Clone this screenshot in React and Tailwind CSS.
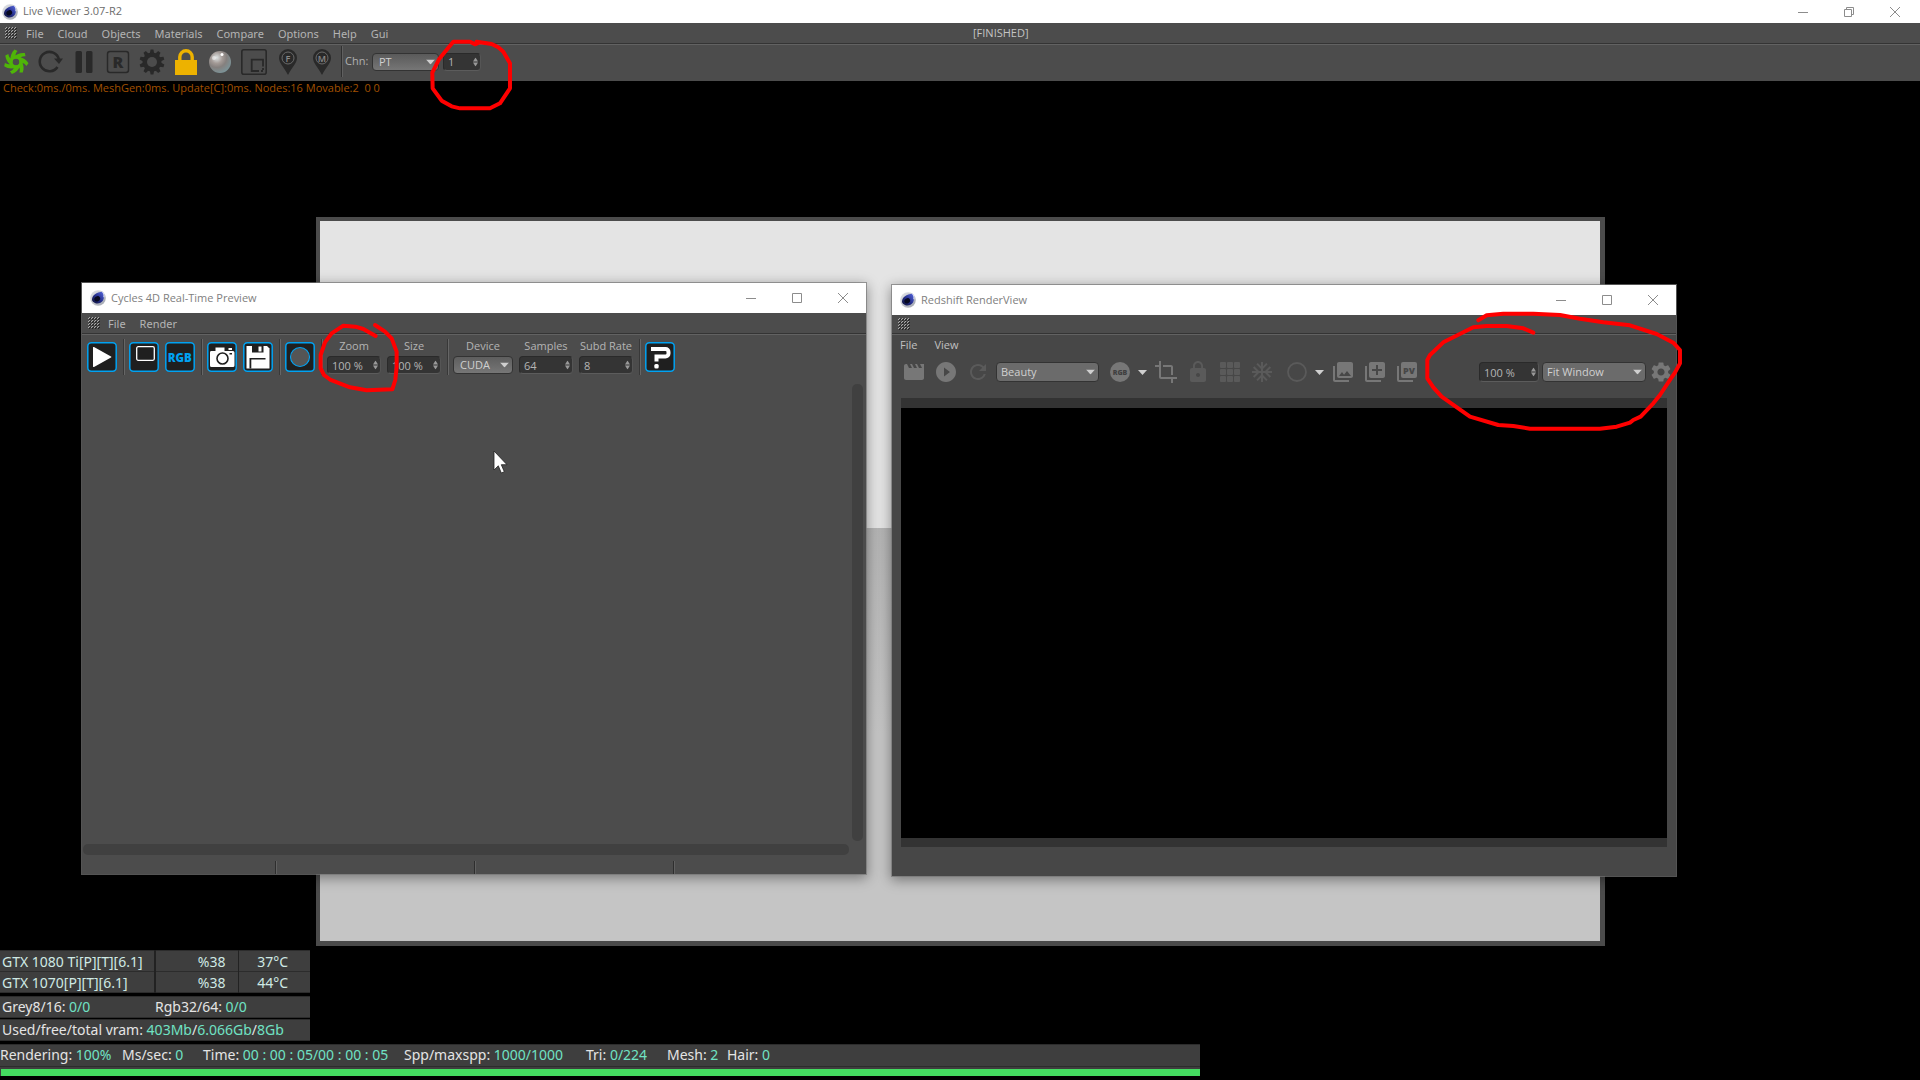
import { Fragment } from "react";
import {
  MdMovie,
  MdPlayCircleFilled,
  MdRefresh,
  MdCrop,
  MdLock,
  MdAcUnit,
  MdPhotoLibrary,
  MdLibraryAdd,
  MdSettings,
} from "react-icons/md";

function AppLogo() {
  return (
    <svg viewBox="0 0 16 16" className="size-4 shrink-0" aria-hidden="true">
      <defs>
        <linearGradient id="logoRim" x1="0" y1="0" x2="1" y2="1">
          <stop offset="0" stopColor="#e6e8ec" />
          <stop offset="1" stopColor="#9da1ab" />
        </linearGradient>
        <linearGradient id="logoBody" x1="1" y1="0" x2="0" y2="1">
          <stop offset="0" stopColor="#5a6be0" />
          <stop offset="0.5" stopColor="#26308e" />
          <stop offset="1" stopColor="#0c1034" />
        </linearGradient>
      </defs>
      <circle cx="8" cy="8" r="7.800" fill="url(#logoRim)" />
      <path d="M2 9.500C2 5.500 6.500 2 12.500 1.800c1.800 2 2 6 .5 8.700-1.500 2.500-5 3.500-7.500 2.700C3.500 12.500 2 11.500 2 9.500z" fill="url(#logoBody)" />
      <ellipse cx="7.200" cy="8.800" rx="3" ry="2.500" fill="#070920" transform="rotate(-30 7.200 8.800)" />
      <path d="M12.500 2c1.200 1.300 1.700 3.200 1.300 5.200" stroke="#eef0ff" strokeWidth="0.900" fill="none" />
    </svg>
  );
}

function Grip() {
  return (
    <svg viewBox="0 0 12 12" className="size-3 shrink-0" aria-hidden="true">
      <defs>
        <pattern id="gripDots" width="3" height="3" patternUnits="userSpaceOnUse">
          <rect width="1" height="1" x="1" fill="#aaaaaa" />
          <rect width="1" height="1" y="1" fill="#aaaaaa" />
          <rect width="1" height="1" x="2" y="1" fill="#222222" />
          <rect width="1" height="1" x="1" y="2" fill="#222222" />
        </pattern>
      </defs>
      <rect width="12" height="12" fill="url(#gripDots)" />
    </svg>
  );
}

function WindowControls({ restore = false }) {
  const base = "flex h-full w-[46px] items-center justify-center";
  return (
    <div className="ml-auto flex h-full text-[#8c8c8c]">
      <button type="button" aria-label="Minimize" className={base}>
        <svg viewBox="0 0 10 10" className="size-2.5" stroke="currentColor"><path d="M0 5.500h10" /></svg>
      </button>
      <button type="button" aria-label={restore ? "Restore" : "Maximize"} className={base}>
        <svg viewBox="0 0 10 10" className="size-2.5" fill="none" stroke="currentColor">
          {restore ? <path d="M.5 2.500h7v7h-7zM2.500 2.500v-2h7v7h-2" /> : <path d="M.5.5h9v9h-9z" />}
        </svg>
      </button>
      <button type="button" aria-label="Close" className={base}>
        <svg viewBox="0 0 10 10" className="size-2.5" stroke="currentColor"><path d="M0 0l10 10M10 0L0 10" /></svg>
      </button>
    </div>
  );
}

function Menu({ items }) {
  return (
    <nav className="flex gap-[14px] pt-0.5 font-['Noto_Sans',sans-serif] text-[11px] leading-4 text-[#b4b4b4]">
      {items.map((t) => (
        <button type="button" key={t}>{t}</button>
      ))}
    </nav>
  );
}

function Arrow({ className = "" }) {
  return (
    <svg viewBox="0 0 9 5" className={"h-[5px] w-[9px] " + className} aria-hidden="true">
      <path d="M0 0h9L4.500 5z" fill="#cfcfcf" />
    </svg>
  );
}

function Dropdown({ label, value, className, selectClass }) {
  return (
    <div className={"relative shrink-0 " + className}>
      <select
        aria-label={label}
        defaultValue={value}
        className={"block size-full appearance-none rounded border border-[#333333] text-[11px] leading-4 text-[#d0d0d0] " + selectClass}
      >
        <option>{value}</option>
      </select>
      <Arrow className="pointer-events-none absolute top-1/2 right-1 -translate-y-1/2" />
    </div>
  );
}

function NumberBox({ label, value, className }) {
  return (
    <div className={"relative shrink-0 " + className}>
      <input
        aria-label={label}
        defaultValue={value}
        className="block size-full rounded-sm border border-t-[#2a2a2a] border-r-[#555555] border-b-[#5c5c5c] border-l-[#2a2a2a] bg-[#343434] pl-1 text-[11px] leading-4 text-[#b4b4b4]"
      />
      <svg viewBox="0 0 5 9" className="pointer-events-none absolute top-1/2 right-[3px] h-[9px] w-[5px] -translate-y-1/2" aria-hidden="true">
        <path d="M0 4l2.500-4L5 4zM0 5l2.500 4L5 5z" fill="#999999" />
      </svg>
    </div>
  );
}

/* ---------- main toolbar ---------- */

const C = "#292929";

function GearShape({ fill, hole, teeth = 10 }) {
  return (
    <>
      <circle cx="13" cy="13" r="9.500" fill={fill} />
      {Array.from({ length: teeth }, (_, i) => (
        <path key={i} d="M10.800 4.500l.8-4h2.800l.8 4z" fill={fill} transform={`rotate(${(i * 360) / teeth} 13 13)`} />
      ))}
      <circle cx="13" cy="13" r="5" fill={hole} />
    </>
  );
}

function Pin({ letter }) {
  return (
    <>
      <path d="M13 0a9 9 0 0 0-9 9c0 5 5 9 9 17 4-8 9-12 9-17a9 9 0 0 0-9-9z" fill={C} />
      <circle cx="13" cy="9" r="6" fill="none" stroke="#6a6a6a" strokeWidth="1" />
      <text x="13" y="12.500" fontSize="9" textAnchor="middle" fontWeight="600" fill="#8a8a8a">{letter}</text>
    </>
  );
}

const mainTools = [
  ["Start render", (
    <>
      {Array.from({ length: 7 }, (_, i) => (
        <path key={i} d="M7.500 11C7.200 7 8.500 3.500 11.500.500L14.500 2C12.300 4.300 11.800 6.500 13.500 9z" fill="#4fb508" transform={`rotate(${(i * 360) / 7} 13 13)`} />
      ))}
      <circle cx="13" cy="13" r="4.900" fill="none" stroke="#4fb508" strokeWidth="3.200" />
    </>
  )],
  ["Restart", (
    <>
      <path d="M20.500 18A9.700 9.700 0 1 1 21.800 10" fill="none" stroke={C} strokeWidth="2.600" />
      <path d="M17 9.500h9l-4 5.500z" fill={C} />
    </>
  )],
  ["Pause", <path d="M6 2h3.500a1.500 1.500 0 0 1 1.500 1.500v19A1.500 1.500 0 0 1 9.500 24H6a1.500 1.500 0 0 1-1.500-1.500v-19A1.500 1.500 0 0 1 6 2zM16.500 2H20a1.500 1.500 0 0 1 1.500 1.500v19A1.500 1.500 0 0 1 20 24h-3.500a1.500 1.500 0 0 1-1.500-1.500v-19A1.500 1.500 0 0 1 16.500 2z" fill={C} />],
  ["Region", (
    <>
      <rect x="2.500" y="2.500" width="21" height="21" rx="2.500" fill="none" stroke={C} strokeWidth="1.500" />
      <text x="13" y="19" fontSize="16" fontWeight="800" textAnchor="middle" fill={C}>R</text>
    </>
  )],
  ["Settings", <GearShape fill={C} hole="#4c4c4c" />],
  ["Lock resolution", (
    <>
      <rect x="2" y="11" width="22" height="15" fill="#edb200" />
      <path d="M6.800 11V8a6.200 6.200 0 0 1 12.400 0v3" fill="none" stroke="#edb200" strokeWidth="3.400" />
    </>
  )],
  ["Clay mode", (
    <>
      <defs>
        <radialGradient id="clay" cx="0.35" cy="0.3" r="0.75">
          <stop offset="0" stopColor="#dfe4e4" />
          <stop offset="0.35" stopColor="#a39a96" />
          <stop offset="0.6" stopColor="#85807e" />
          <stop offset="1" stopColor="#7b9499" />
        </radialGradient>
      </defs>
      <circle cx="13" cy="13" r="11" fill="url(#clay)" />
      <circle cx="15" cy="5.500" r="1.500" fill="#ffffff" />
      <circle cx="7" cy="9" r="2" fill="#ffffff" opacity="0.5" />
    </>
  )],
  ["Render region", (
    <>
      <rect x="0.800" y="0.800" width="24.400" height="24.400" rx="2" fill="none" stroke={C} strokeWidth="1.600" />
      <path d="M22 17.500v-6.800H10.700V22H18M22 19v2M20 22h2" fill="none" stroke={C} strokeWidth="1.800" />
    </>
  )],
  ["Focus picker", <Pin letter="F" />],
  ["Material picker", <Pin letter="M" />],
];

function MainHeader() {
  return (
    <header>
      <div className="flex h-[23px] items-center bg-white pr-0.5 pl-0.5">
        <AppLogo />
        <h1 className="ml-[5px] text-[11px] text-[#6c6c6c]">Live Viewer 3.07-R2</h1>
        <WindowControls restore />
      </div>
      <div className="relative flex h-[21px] items-center border-b border-[#343434] bg-[#4c4c4c] pl-[5px]">
        <Grip />
        <div className="w-[9px]" />
        <Menu items={["File", "Cloud", "Objects", "Materials", "Compare", "Options", "Help", "Gui"]} />
        <p className="absolute left-1/2 ml-[13px] text-[11px] text-[#c4c4c4]">[FINISHED]</p>
      </div>
      <div className="flex h-[37px] items-center border-t border-[#626262] bg-[#4c4c4c] pb-[3px] pl-[3px]">
        <div className="flex gap-2">
          {mainTools.map(([name, art]) => (
            <button type="button" key={name} aria-label={name}>
              <svg viewBox="0 0 26 26" className="size-[26px]">{art}</svg>
            </button>
          ))}
        </div>
        <div className="ml-[6px] h-[31px] border-r border-l border-r-[#606060] border-l-[#303030]" />
        <span className="ml-0.5 w-[27px] text-[11px] text-[#b0b0b0]">Chn:</span>
        <Dropdown label="Channel" value="PT" className="h-[18px] w-[67px]" selectClass="bg-linear-to-b from-[#5a5a5a] to-[#767676] pl-1.5" />
        <NumberBox label="Channel index" value="1" className="ml-1 h-[18px] w-[38px]" />
      </div>
    </header>
  );
}

/* ---------- statistics ---------- */

const Val = ({ children }) => <span className="text-[#70e2c4]">{children}</span>;
const strip = "border-y border-[#2c2c2c] bg-[#3e3e3e]";

const gpus = [
  ["GTX 1080 Ti[P][T][6.1]", "%38", "37°C"],
  ["GTX 1070[P][T][6.1]", "%38", "44°C"],
];

function Stats() {
  return (
    <footer className="mt-1 font-['Noto_Sans',sans-serif] text-sm leading-[19px] whitespace-pre text-[#e4e4e4]">
      <div className="w-[310px]">
        <table className="w-full table-fixed border-collapse text-[#cfe9e4]">
          <tbody>
            {gpus.map(([name, load, temp]) => (
              <tr key={name} className={"h-[21px] " + strip}>
                <td className="w-[155px] border-r-2 border-[#222222] p-0 pl-0.5">{name}</td>
                <td className="w-[83px] border-r border-[#222222] p-0 pr-3 text-right">{load}</td>
                <td className="p-0 pr-[22px] text-right">{temp}</td>
              </tr>
            ))}
          </tbody>
        </table>
        <div className={"mt-[3px] flex h-[22px] pl-0.5 " + strip}>
          <p className="w-[153px]">Grey8/16: <Val>0/0</Val></p>
          <p>Rgb32/64: <Val>0/0</Val></p>
        </div>
        <p className={"mt-px h-[22px] pl-0.5 " + strip}>
          Used/free/total vram: <Val>403Mb</Val>/<Val>6.066Gb</Val>/<Val>8Gb</Val>
        </p>
      </div>
      <div className="mt-[3px] w-5/8 bg-[#3e3e3e]">
        <div className={"flex h-[23px] " + strip}>
          <p className="w-[122px]">Rendering: <Val>100%</Val></p>
          <p className="w-[81px]">Ms/sec: <Val>0</Val></p>
          <p className="w-[201px]">Time: <Val>00 : 00 : 05/00 : 00 : 05</Val></p>
          <p className="w-[182px]">Spp/maxspp: <Val>1000/1000</Val></p>
          <p className="w-[81px]">Tri: <Val>0/224</Val></p>
          <p className="w-[60px]">Mesh: <Val>2</Val></p>
          <p>Hair: <Val>0</Val></p>
        </div>
        <div className="mt-0.5 mb-1 ml-px h-[7px] bg-[#44dc60]" role="progressbar" aria-valuenow={100} aria-label="Rendering progress" />
      </div>
    </footer>
  );
}

/* ---------- floating windows ---------- */

function FloatingWindow({ title, className, children }) {
  return (
    <section className={"absolute flex w-[786px] flex-col border border-[#777777]/70 bg-clip-padding shadow-[0_3px_12px_rgba(0,0,0,0.4)] " + className}>
      <div className="flex h-[30px] shrink-0 items-center bg-white pl-2">
        <AppLogo />
        <h2 className="ml-[5px] text-[11px] text-[#808080]">{title}</h2>
        <WindowControls />
      </div>
      {children}
    </section>
  );
}

const B = "#00a2f2";

function TileButton({ name, children }) {
  return (
    <button type="button" aria-label={name} className="mt-[3px]">
      <svg viewBox="0 0 30 30" className="size-[30px]">
        <rect x="0.800" y="0.800" width="28.400" height="28.400" rx="3.500" fill="#1f1f1f" stroke={B} strokeWidth="1.500" />
        {children}
      </svg>
    </button>
  );
}

const Sep = () => <div className="-mr-0.5 h-9 border-r border-l border-r-[#666666] border-l-[#383838]" />;

function Field({ label, children, w }) {
  return (
    <div className={"flex flex-col items-center text-[11px] text-[#b4b4b4] " + w}>
      <span className="h-[17px] leading-[13px] whitespace-nowrap">{label}</span>
      {children}
    </div>
  );
}

function CyclesWindow() {
  return (
    <FloatingWindow title="Cycles 4D Real-Time Preview" className="top-[282px] left-[81px] h-[593px] bg-[#4c4c4c]">
      <div className="flex h-[21px] shrink-0 items-center border-b border-[#343434] pl-[6px]">
        <Grip />
        <div className="w-2" />
        <Menu items={["File", "Render"]} />
      </div>
      <div className="flex h-[50px] shrink-0 items-start gap-[6px] border-t border-[#626262] pt-1 pl-[5px]">
        <TileButton name="Play"><path d="M6 5.500v19a.6.600 0 0 0 1 .4l17-9.300a.7.700 0 0 0 0-1.200L7 5.100a.6.600 0 0 0-1 .4z" fill="#fff" /></TileButton>
        <Sep />
        <TileButton name="Region"><rect x="7.700" y="4.700" width="17.600" height="13.600" rx="1.500" fill="#1f1f1f" stroke="#fff" strokeWidth="1.300" /></TileButton>
        <TileButton name="Channels"><text x="14.700" y="19.800" fontSize="11.500" fontWeight="800" textAnchor="middle" fill={B}>RGB</text></TileButton>
        <Sep />
        <TileButton name="Snapshot">
          <path d="M4 9h4.500V5.500h9V9h8.500a1.500 1.500 0 0 1 1.500 1.500v13a1.500 1.500 0 0 1-1.500 1.500H4.500A1.500 1.500 0 0 1 3 23.500v-13A1.500 1.500 0 0 1 4 9zM21.500 6h3.500v2h-3.500z" fill="#fff" />
          <circle cx="15.500" cy="16.500" r="5.500" fill="#fff" stroke="#1f1f1f" strokeWidth="1.600" />
          <rect x="22.500" y="11" width="2.500" height="1.500" fill="#1f1f1f" />
        </TileButton>
        <TileButton name="Save">
          <path d="M3.500 4H24l2.500 2.500V26.500h-23z" fill="#fff" />
          <path d="M9 4h11.500v6.500H9zM7.500 17.500h15V16H6.500v10.500h1.800v-9z" fill="#1f1f1f" />
          <rect x="15.500" y="4.500" width="3" height="5" fill="#fff" />
        </TileButton>
        <Sep />
        <TileButton name="Sphere"><circle cx="15" cy="15" r="9.500" fill="#555555" stroke={B} strokeWidth="1.100" /></TileButton>
        <Sep />
        <Field label="Zoom" w="w-[54px]"><NumberBox label="Zoom" value="100 %" className="h-[18px] w-full" /></Field>
        <Field label="Size" w="w-[54px]"><NumberBox label="Size" value="100 %" className="h-[18px] w-full" /></Field>
        <Sep />
        <Field label="Device" w="w-[60px]"><Dropdown label="Device" value="CUDA" className="h-[18px] w-full" selectClass="bg-linear-to-b from-[#5e5e5e] to-[#767676] pl-1.5" /></Field>
        <Field label="Samples" w="w-[54px]"><NumberBox label="Samples" value="64" className="h-[18px] w-full" /></Field>
        <Field label="Subd Rate" w="w-[54px]"><NumberBox label="Subd Rate" value="8" className="h-[18px] w-full" /></Field>
        <Sep />
        <TileButton name="Help">
          <path d="M6 7h14.500a3 3 0 0 1 3 3v1.500a3 3 0 0 1-3 3H11.500v5" fill="none" stroke="#fff" strokeWidth="4" />
          <rect x="9.300" y="22" width="4.400" height="4.400" rx="1.500" fill="#fff" />
        </TileButton>
      </div>
      <div className="grid flex-1 grid-cols-[1fr_11px] grid-rows-[1fr_11px] gap-x-[3px] gap-y-[3px] pr-[3px] pl-px">
        <div />
        <div className="rounded-[5px] bg-[#404040]" />
        <div className="rounded-[5px] bg-[#404040]" />
      </div>
      <div className="mt-[6px] flex h-[13px] shrink-0">
        <div className="w-[194px] border-r border-[#2e2e2e]" />
        <div className="w-[199px] border-r border-l border-r-[#2e2e2e] border-l-[#606060]" />
        <div className="w-[199px] border-r border-l border-r-[#2e2e2e] border-l-[#606060]" />
        <div className="border-l border-[#606060]" />
      </div>
    </FloatingWindow>
  );
}

function RsButton({ name, children, w = "w-8", dim = false, className = "" }) {
  return (
    <button type="button" aria-label={name} className={`flex h-8 shrink-0 items-center justify-center ${w} ${dim ? "text-[#5a5a5a]" : "text-[#777777]"} ${className}`}>
      {children}
    </button>
  );
}

function RedshiftWindow() {
  return (
    <FloatingWindow title="Redshift RenderView" className="top-[284px] left-[891px] h-[593px] bg-[#474747]">
      <div className="flex h-[19px] shrink-0 items-center border-b border-[#343434] bg-[#4c4c4c] pl-[6px]">
        <Grip />
      </div>
      <div className="flex h-[22px] shrink-0 items-center border-t border-[#626262] pl-2">
        <nav className="flex gap-[17px] text-[11px] text-[#c0c0c0]">
          <button type="button">File</button>
          <button type="button">View</button>
        </nav>
      </div>
      <div className="flex h-[40px] shrink-0 items-start pl-[6px]">
        <RsButton name="Render"><MdMovie size={24} /></RsButton>
        <RsButton name="Start IPR"><MdPlayCircleFilled size={24} /></RsButton>
        <RsButton name="Refresh" dim><MdRefresh size={24} /></RsButton>
        <Dropdown label="AOV" value="Beauty" className="mt-[6px] ml-0.5 h-5 w-[103px]" selectClass="bg-[#6b6b6b] pl-1" />
        <RsButton name="RGB channels" className="ml-[5px]">
          <svg viewBox="0 0 20 20" className="size-5">
            <circle cx="10" cy="10" r="10" fill="currentColor" />
            <text x="10" y="12.500" fontSize="7" fontWeight="800" textAnchor="middle" fill="#404040">RGB</text>
          </svg>
        </RsButton>
        <RsButton name="Channel menu" w="w-3"><Arrow /></RsButton>
        <RsButton name="Crop" className="ml-0.5"><MdCrop size={24} /></RsButton>
        <RsButton name="Lock" dim><MdLock size={24} /></RsButton>
        <RsButton name="Buckets" dim>
          <svg viewBox="0 0 20 20" className="size-5" fill="currentColor">
            {[0, 7, 14].map((y) => (
              <Fragment key={y}>
                <rect x="0" y={y} width="6" height="6" rx="1" />
                <rect x="7" y={y} width="6" height="6" rx="1" />
                <rect x="14" y={y} width="6" height="6" rx="1" />
              </Fragment>
            ))}
          </svg>
        </RsButton>
        <RsButton name="Freeze" dim><MdAcUnit size={24} /></RsButton>
        <RsButton name="Clay" dim className="ml-[3px]">
          <svg viewBox="0 0 20 20" className="size-5"><circle cx="10" cy="10" r="9" fill="none" stroke="currentColor" strokeWidth="1.800" /></svg>
        </RsButton>
        <RsButton name="Clay menu" w="w-3"><Arrow /></RsButton>
        <RsButton name="Snapshots" className="ml-0.5"><MdPhotoLibrary size={24} /></RsButton>
        <RsButton name="Add snapshot"><MdLibraryAdd size={24} /></RsButton>
        <RsButton name="Send to picture viewer">
          <svg viewBox="0 0 20 20" className="size-5">
            <path d="M0 4h2v14h14v2H2a2 2 0 0 1-2-2z" fill="currentColor" />
            <rect x="4" width="16" height="16" rx="2" fill="currentColor" />
            <text x="12" y="11.500" fontSize="9" fontWeight="800" textAnchor="middle" fill="#474747">PV</text>
          </svg>
        </RsButton>
        <NumberBox label="Zoom" value="100 %" className="mt-[6px] ml-auto h-5 w-[60px]" />
        <Dropdown label="Fit" value="Fit Window" className="mt-[6px] ml-[3px] h-5 w-[104px]" selectClass="bg-[#6b6b6b] pl-1" />
        <RsButton name="Settings" w="w-[30px]"><MdSettings size={24} /></RsButton>
      </div>
      <div className="mx-[9px] mt-[2px] mb-[29px] flex-1 border-t-[10px] border-b-[9px] border-[#333333] bg-black" />
    </FloatingWindow>
  );
}

/* ---------- pen strokes and pointer ---------- */

function PenMarks() {
  return (
    <svg className="pointer-events-none absolute top-0 left-0 h-[1080px] w-[1920px]" viewBox="0 0 1920 1080" fill="none" stroke="#ff0000" strokeWidth="12" strokeLinecap="round" strokeLinejoin="round" aria-hidden="true">
      <g transform="translate(280 0) scale(0.3333)">
        <path d="M598 127L585 133L570 125H520L497 153L477 178L457 218L458 265L485 302L515 319L540 325H630L660 310L690 265V190L670 155L655 142L635 132L590 125" />
      </g>
      <g transform="translate(80 280) scale(0.3333)">
        <path d="M887 168L850 147L826 140L790 137L755 160L735 187L722 225V265L732 285L752 300L810 322L860 331L937 328L946 300L950 262V215L935 175L915 155L885 135" />
      </g>
      <g transform="translate(1220 280) scale(0.3333)">
        <path d="M775 121L800 106L850 101L940 101L1020 105L1080 116L1150 127L1230 136L1310 162L1360 188L1380 210V250L1365 278L1350 300L1320 345L1300 370L1262 410L1240 420L1230 428L1190 440L1140 446H930L880 438L835 435L750 410L665 350L640 322L622 295V240L630 225L670 187L760 142L800 138H860L910 145L940 158" />
      </g>
    </svg>
  );
}

function Pointer() {
  return (
    <svg viewBox="0 0 15 25" className="pointer-events-none absolute top-[450px] left-[493px] h-[25px] w-[15px]" aria-hidden="true">
      <path d="M1 1v19l4.300-4.200 3 7.200 3-1.300-3-7h5.700z" fill="#fff" stroke="#222" strokeWidth="0.800" />
    </svg>
  );
}

export default function App() {
  return (
    <div className="relative flex min-h-screen flex-col overflow-hidden bg-black font-['Open_Sans','Noto_Sans',sans-serif]">
      <MainHeader />
      <p className="pl-[3px] text-[11px] leading-[14px] whitespace-pre text-[#a25000]">
        Check:0ms./0ms. MeshGen:0ms. Update[C]:0ms. Nodes:16 Movable:2  0 0
      </p>
      <main className="mt-[122px] mr-[315px] ml-[316px] flex flex-1 flex-col border-t-4 border-r-5 border-b-5 border-l-4 border-[#4b4b4b]">
        <div className="h-[307px] bg-[#e4e4e4]" />
        <div className="flex-1 bg-linear-to-b from-[#b4b4b4] to-[#c5c5c5] to-50%" />
      </main>
      <Stats />
      <CyclesWindow />
      <RedshiftWindow />
      <Pointer />
      <PenMarks />
    </div>
  );
}
